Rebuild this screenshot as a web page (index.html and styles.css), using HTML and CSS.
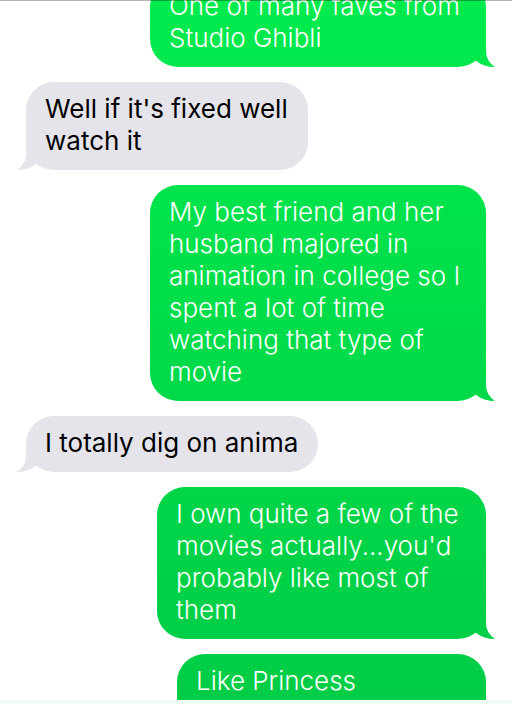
FILE: index.html
```html
<!DOCTYPE html>
<html lang="en">
<head>
    <meta charset="UTF-8">
    <meta name="viewport" content="width=device-width, initial-scale=1.0">
    <title>Messages</title>
    <link rel="stylesheet" href="styles.css">
</head>
<body>
    <main class="conversation">
        <div class="messages">
            <p class="bubble sent wide">One of many faves from<br>Studio Ghibli</p>
            <p class="bubble received">Well if it's fixed well<br>watch it</p>
            <p class="bubble sent wide">My best friend and her<br>husband majored in<br>animation in college so I<br>spent a lot of time<br>watching that type of<br>movie</p>
            <p class="bubble received">I totally dig on anima</p>
            <p class="bubble sent medium">I own quite a few of the<br>movies actually...you'd<br>probably like most of<br>them</p>
            <p class="bubble sent cut-off">Like Princess</p>
        </div>
    </main>
    <footer class="input-edge"></footer>
</body>
</html>
```

FILE: styles.css
```css
* {
    box-sizing: border-box;
}
body {
    margin: 0;
    height: 100vh;
    display: flex;
    flex-direction: column;
    overflow: hidden;
    background-color: #fff;
    font-family: Inter, "Liberation Sans", sans-serif;
}
.conversation {
    position: relative;
    flex: 1;
    min-height: 0;
    display: flex;
    flex-direction: column;
    overflow: hidden;
}
/* hairline under the navigation bar */
.conversation::before {
    content: "";
    position: absolute;
    z-index: 1;
    top: 0;
    left: 0;
    right: 0;
    height: 1px;
    background-color: rgba(0, 0, 0, 0.3);
}
/* scrolled so the first message is partly hidden */
.messages {
    flex: 1;
    display: flex;
    flex-direction: column;
    gap: 15px;
    margin-top: -21px;
    padding: 0 26px;
}
.bubble {
    position: relative;
    margin: 0;
    padding: 11px 20px 13px 19px;
    border-radius: 28px;
    font-size: 26px;
    line-height: 32px;
}
.bubble::after {
    content: "";
    position: absolute;
    bottom: 0;
    width: 28px;
    height: 30px;
    background: inherit;
}
.sent {
    align-self: flex-end;
    color: #fff;
    font-weight: 300;
    /* one gradient shared by every sent bubble */
    background: linear-gradient(#00eb4d, #00cc46) fixed;
}
.sent::after {
    right: -9px;
    clip-path: path("M19 0 V14 Q19 24 28 30 Q17 30 9 24 L2 14 Z");
}
.received {
    align-self: flex-start;
    color: #000;
    background: #e5e4ea;
}
.received::after {
    left: -9px;
    clip-path: path("M9 0 V14 Q9 24 0 30 Q11 30 19 24 L26 14 Z");
}
.wide {
    min-width: 336px;
}
.medium {
    min-width: 329px;
}
.cut-off {
    flex: 1 0 auto;
    min-width: 309px;
    padding-bottom: 0;
    border-radius: 28px 28px 0 0;
}
.cut-off::after {
    display: none;
}
.input-edge {
    height: 4px;
    background-color: #effcf3;
}
```
